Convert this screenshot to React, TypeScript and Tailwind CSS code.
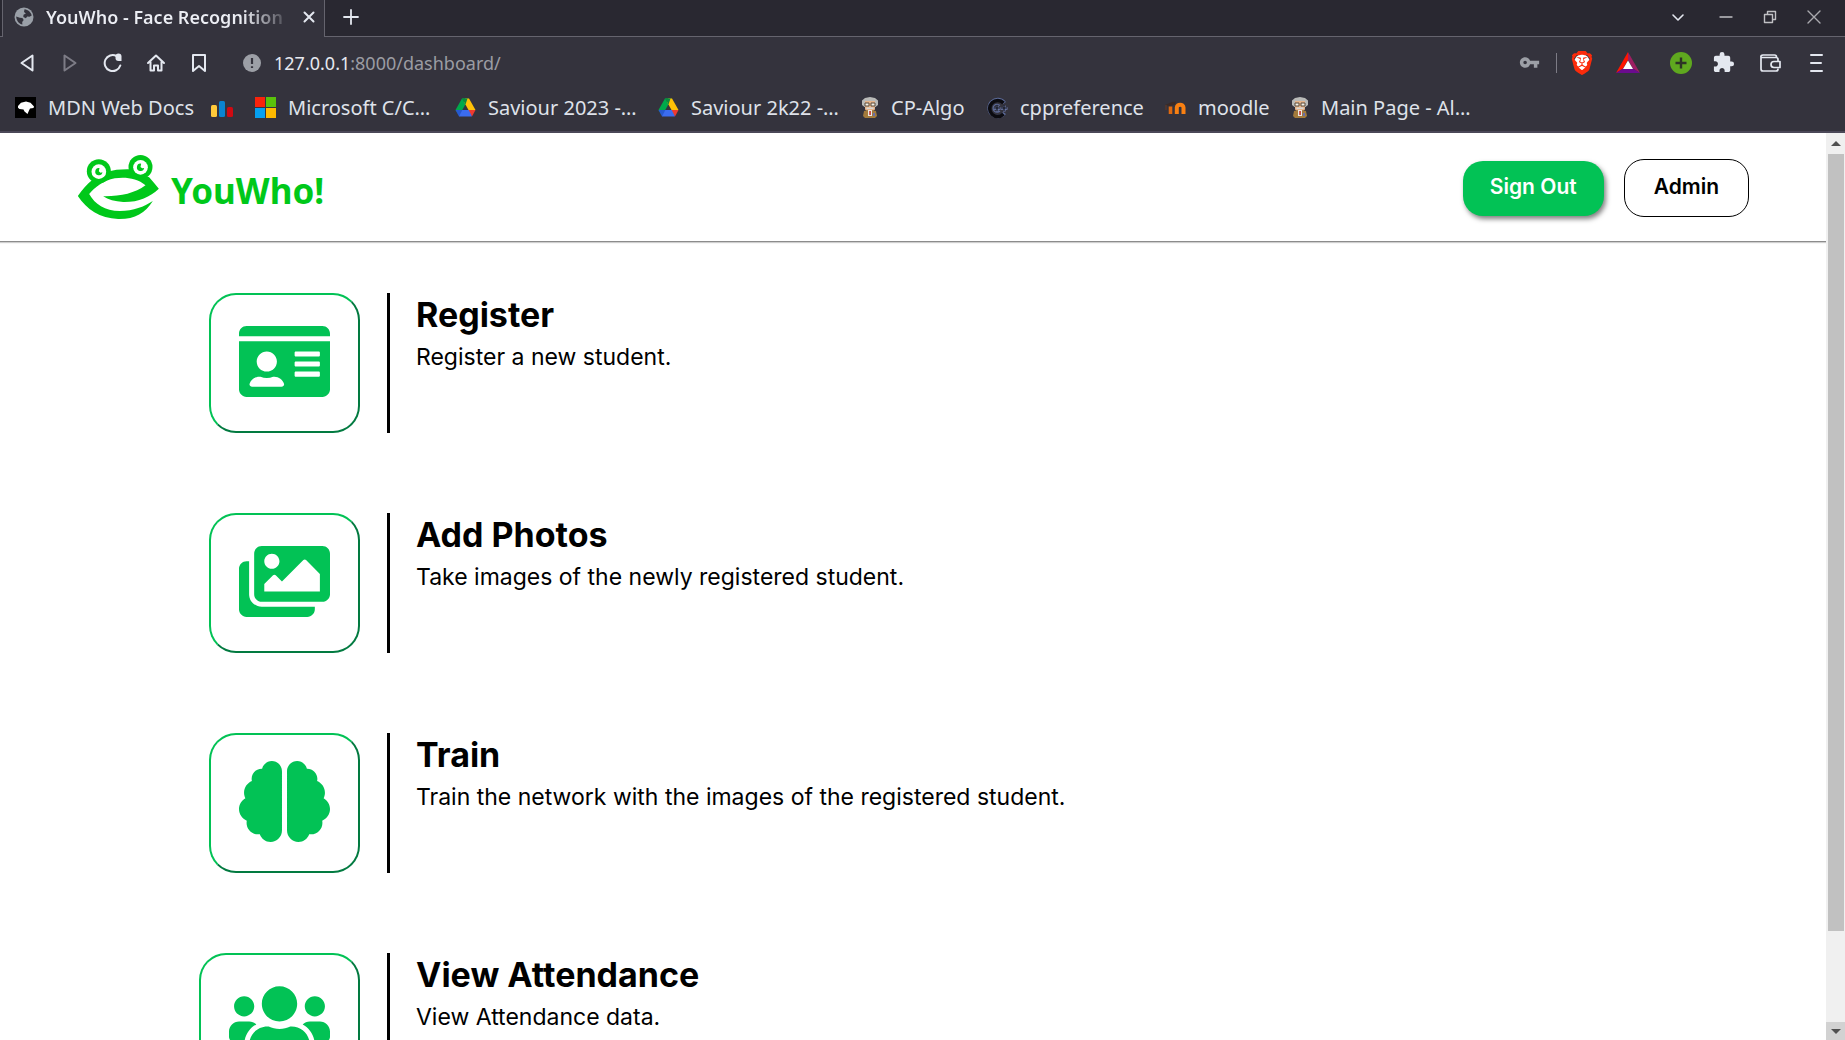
import React from "react";
import { FaBrain, FaIdCard, FaImages, FaUsers } from "react-icons/fa";
import { SiBrave } from "react-icons/si";
import { MdExtension, MdVpnKey } from "react-icons/md";

function GlobeIcon() {
  return (
    <svg viewBox="0 0 20 20" className="size-5 shrink-0" aria-hidden="true">
      <circle cx="10" cy="10" r="9.5" fill="#9aa0a8" />
      <path d="M10.5 2.2c3.600.3 6.500 2.900 7.200 6.300l-2.200 1.300-2.300-.3-1.300 1.700-2.600-1.200.2-2.200 2.400-1.200-1.900-1.500z" fill="#34333d" />
      <path d="M2.200 9.500l3.600 1.200 2.600.3 1.300 2.100-1.500 1.800.2 2.700c-3.600-.9-6.100-4.200-6.200-8.100z" fill="#34333d" />
    </svg>
  );
}

function MdnIcon() {
  return (
    <svg viewBox="0 0 21 21" className="size-[21px] shrink-0" aria-hidden="true">
      <rect width="21" height="21" fill="#000" />
      <path d="M3 9l3-3.200 5-1.300 4.500 1.200 3.500 3.800-.5 1.500-3.500.4-1.200 2.600-1.300 3-3-2.600-1-1.800-4-.6-1.500-1.300z" fill="#fff" />
    </svg>
  );
}

function BarsIcon() {
  return (
    <svg viewBox="0 0 22 21" className="h-[21px] w-[22px] shrink-0" aria-hidden="true">
      <rect x="0" y="8" width="6" height="12" rx="1.500" fill="#ffca3a" />
      <rect x="8" y="4" width="6" height="16" rx="1.500" fill="#0a84d0" />
      <rect x="16" y="10" width="6" height="10" rx="1.500" fill="#d00a12" />
    </svg>
  );
}

function MicrosoftIcon() {
  return (
    <svg viewBox="0 0 21 21" className="size-[21px] shrink-0" aria-hidden="true">
      <rect width="10" height="10" fill="#f8230b" />
      <rect x="11" width="10" height="10" fill="#5ac20b" />
      <rect y="11" width="10" height="10" fill="#06a0f0" />
      <rect x="11" y="11" width="10" height="10" fill="#fdb900" />
    </svg>
  );
}

function DriveIcon() {
  return (
    <svg viewBox="0 0 21 19" className="h-[19px] w-[21px] shrink-0" aria-hidden="true">
      <path d="M7 .5h3.500v5.800L4.200 17.500.500 12z" fill="#00a94b" />
      <path d="M7 .5h7l-3.500 6z" fill="#0b8a3e" />
      <path d="M14 .5L20.500 12h-7L8.800 3.600 10.500.5z" fill="#ffc107" />
      <path d="M7 .5h5.500l-2 6z" fill="#0b8a3e" />
      <path d="M4.200 12h12.600v6.500H4z" fill="#3b6cf0" />
      <path d="M.5 12h6.800L4 18.500z" fill="#2659d0" />
      <path d="M13.700 12h6.800L17 18.500z" fill="#ee3a2f" />
    </svg>
  );
}

function ProfessorIcon() {
  return (
    <svg viewBox="0 0 18 22" className="h-[22px] w-[18px] shrink-0" aria-hidden="true">
      <path d="M1 3.500L4 1l5-1 5 1 3 2.500V8l-2.500 2h-11L1 8z" fill="#b9bab8" />
      <path d="M4 4h10v8.500l-3 2H7l-3-2z" fill="#e5b48b" />
      <path d="M4 6h4v3H4zM10 6h4v3h-4z" fill="#f3f1e8" stroke="#5a4a3a" strokeWidth="1" />
      <path d="M5.500 10.500h7V12h-7z" fill="#d8d8d6" />
      <path d="M3 14l4-1h4l4 1 1 5-2 2H4l-2-2z" fill="#a27a3c" />
      <path d="M7 13h4v6H7z" fill="#ece8e0" />
      <path d="M8.300 14h1.500v4H8.300z" fill="#c3241e" />
      <path d="M12 16h2v3h-2z" fill="#6a6fa8" />
    </svg>
  );
}

function CppIcon() {
  return (
    <svg viewBox="0 0 22 22" className="size-[22px] shrink-0" fill="none" aria-hidden="true">
      <path d="M18.500 6A8.500 8.500 0 1 0 18.500 16" stroke="#5c6b9a" strokeWidth="3.500" />
      <path d="M17.500 6A8 8 0 1 0 17.500 17" stroke="#0b0b10" strokeWidth="3.600" />
      <path d="M14 8.500a4 4 0 1 0 0 5.500" stroke="#5c6b9a" strokeWidth="1.200" />
      <path d="M8 11.500h6.500M11.300 8.500v6M15 11.500h6.500M18.300 8.500v6" stroke="#6f7eb0" strokeWidth="2.600" />
      <path d="M8 11h6M11 8v6M15 11h6M18 8v6" stroke="#111116" strokeWidth="1.200" />
    </svg>
  );
}

function MoodleIcon() {
  return (
    <svg viewBox="0 0 21 21" className="size-[21px] shrink-0" fill="none" aria-hidden="true">
      <path d="M5.500 17V9.500" stroke="#e06a10" strokeWidth="3.600" />
      <path d="M11.800 17v-6.500c0-3.800 6.700-3.800 6.700 0V17" stroke="#f98012" strokeWidth="4" />
      <path d="M0 8l7-3 4-.5-1.500 3.500-5.500.8z" fill="#3a2a26" />
      <path d="M1 8v5" stroke="#6a3a20" strokeWidth="1" />
    </svg>
  );
}

function BatIcon() {
  return (
    <svg viewBox="0 0 24 21" className="h-[21px] w-6" aria-hidden="true">
      <path d="M12 0v8L7 16.500 0 21z" fill="#ff1500" />
      <path d="M12 0l12 21-7-4.500L12 8z" fill="#9e1f63" />
      <path d="M0 21l7-4.500h10l7 4.500z" fill="#6b0b8f" />
      <path d="M12 8.500l5 8.500H7z" fill="#fff" />
    </svg>
  );
}

function FrogLogo() {
  return (
    <svg viewBox="52 42 248 198" className="h-[66px] w-[83px] shrink-0" aria-hidden="true">
      <path
        fill="#00c81a"
        d="M54 168C68 147 82 133 97 120C125 96 160 87 209 88L268 112C278 124 288 135 297 146C270 171 235 187 190 186C165 185 145 179 130 169C180 170 225 160 257 136C232 114 195 110 165 115C130 122 105 142 88 162C105 192 135 213 180 213C222 213 252 200 279 183C255 220 225 238 175 237C120 235 80 208 54 168Z"
      />
      <circle cx="117" cy="94" r="36" fill="#00c81a" />
      <circle cx="242" cy="81" r="36" fill="#00c81a" />
      <circle cx="117" cy="95" r="22" fill="#fff" />
      <circle cx="242" cy="82" r="22" fill="#fff" />
      <path d="M119 84a11 11 0 1 0 9 13l-6 1-5-4z" fill="#00c81a" />
      <path d="M244 71a11 11 0 1 0 9 13l-6 1-5-4z" fill="#00c81a" />
    </svg>
  );
}

const line = {
  fill: "none",
  stroke: "#e4e8f0",
  strokeWidth: 2,
  strokeLinejoin: "round" as const,
  strokeLinecap: "round" as const,
};

function TabStrip() {
  return (
    <div className="flex h-[37px] bg-[#292831]">
      <div className="w-[3px] border-r border-b border-[#65646e]" />
      <div className="flex w-[322px] items-center border-r border-[#65646e] bg-[#34333d] pr-2 pb-1 pl-[11px]">
        <GlobeIcon />
        <div className="ml-3 w-[246px] shrink-0 overflow-hidden bg-gradient-to-r from-[#eceef4] from-80% to-transparent bg-clip-text text-lg font-semibold whitespace-nowrap text-transparent">
          YouWho - Face Recognition
        </div>
        <button aria-label="Close tab" className="ml-2.5 shrink-0">
          <svg viewBox="0 0 14 14" className="size-[14px]">
            <path d="M2.500 2.500l9 9M11.500 2.500l-9 9" {...line} />
          </svg>
        </button>
      </div>
      <div className="flex flex-1 items-center border-b border-[#65646e] pb-[3px]">
        <button aria-label="New tab" className="ml-[18px]">
          <svg viewBox="0 0 16 16" className="size-4">
            <path d="M8 1v14M1 8h14" {...line} strokeWidth={1.8} />
          </svg>
        </button>
        <div className="mr-6 ml-auto flex items-center gap-[30px]">
          <button aria-label="Search tabs">
            <svg viewBox="0 0 14 14" className="size-[14px]">
              <path d="M2 5l5 5 5-5" {...line} strokeWidth={1.6} />
            </svg>
          </button>
          <button aria-label="Minimize" className="ml-1">
            <svg viewBox="0 0 14 14" className="size-[14px]">
              <path d="M1 7h12" {...line} stroke="#c0c0c4" strokeWidth={1.4} />
            </svg>
          </button>
          <button aria-label="Restore">
            <svg viewBox="0 0 14 14" className="size-[14px]">
              <path d="M1.500 4.500h8v8h-8zM4.500 4V1.500h8v8H10" {...line} stroke="#c0c0c4" strokeWidth={1.4} />
            </svg>
          </button>
          <button aria-label="Close window">
            <svg viewBox="0 0 14 14" className="size-[14px]">
              <path d="M1 1l12 12M13 1L1 13" {...line} stroke="#a9a9ae" strokeWidth={1.4} />
            </svg>
          </button>
        </div>
      </div>
    </div>
  );
}

function Toolbar() {
  return (
    <div className="flex h-[51px] items-center pr-[22px] pl-[17px]">
      <div className="flex items-center gap-[23px]">
        <button aria-label="Back">
          <svg viewBox="0 0 20 20" className="size-5">
            <path d="M15.500 2.500v15L4.500 10z" {...line} />
          </svg>
        </button>
        <button aria-label="Forward">
          <svg viewBox="0 0 20 20" className="size-5">
            <path d="M4.500 2.500v15l11-7.500z" {...line} stroke="#7d7c86" />
          </svg>
        </button>
        <button aria-label="Reload">
          <svg viewBox="0 0 20 20" className="size-5">
            <path d="M13.500 3A8 8 0 1 0 17.300 12.500" {...line} />
            <path d="M12.500 3.500a3 3 0 0 1 6 0V8h-3a3 3 0 0 1-3-3z" fill="#e4e8f0" />
          </svg>
        </button>
        <button aria-label="Home">
          <svg viewBox="0 0 20 20" className="size-5">
            <path d="M2 10l8-7.500 8 7.500M4.500 9v8.500H8V12.500h4v5h3.500V9" {...line} />
          </svg>
        </button>
        <button aria-label="Bookmark">
          <svg viewBox="0 0 20 20" className="size-5">
            <path d="M4 2h12v16l-6-5-6 5z" {...line} />
          </svg>
        </button>
      </div>
      <button aria-label="Site information" className="ml-[34px]">
        <svg viewBox="0 0 18 18" className="size-[18px]">
          <circle cx="9" cy="9" r="9" fill="#9c9fa6" />
          <path d="M9 4v6M9 12.200v1.800" stroke="#34333d" strokeWidth="2.200" />
        </svg>
      </button>
      <div className="ml-[13px] flex-1 text-lg text-[#9b9ca3]">
        <span className="text-[#e6e9f0]">127.0.0.1</span>:8000/dashboard/
      </div>
      <div className="flex items-center">
        <button aria-label="Passwords">
          <MdVpnKey className="size-[21px] text-[#9c9fa6]" />
        </button>
        <div className="ml-4 h-5 w-px bg-[#7d7c86]" />
        <button aria-label="Brave Shields" className="ml-[13px]">
          <svg viewBox="0 0 24 26" className="h-[26px] w-6">
            <ellipse cx="12" cy="13" rx="8" ry="9" fill="#fff" />
            <g transform="translate(0 1)">
              <SiBrave size={24} color="#fb2b0b" />
            </g>
          </svg>
        </button>
        <button aria-label="Brave Rewards" className="ml-[22px]">
          <BatIcon />
        </button>
        <button aria-label="Add" className="ml-[30px]">
          <svg viewBox="0 0 22 22" className="size-[22px]">
            <circle cx="11" cy="11" r="11" fill="#5fa81f" />
            <path d="M11 5.500v11M5.500 11h11" stroke="#2d3326" strokeWidth="2.400" />
          </svg>
        </button>
        <button aria-label="Extensions" className="ml-5">
          <MdExtension className="size-[23px] text-[#e4e8f0]" />
        </button>
        <button aria-label="Wallet" className="ml-6">
          <svg viewBox="0 0 22 20" className="h-5 w-[22px]">
            <path d="M2 4.500V16c0 1.200.8 2 2 2h13c1.200 0 2-.8 2-2M19 8V6.500c0-1-.8-2-2-2H2C1.500 2.800 2.500 2 4 2h11.500c1 0 2 .8 2 2" {...line} strokeWidth={1.700} />
            <path d="M21 8.500h-6a3 3 0 0 0 0 6h6z" {...line} strokeWidth={1.700} />
          </svg>
        </button>
        <button aria-label="Menu" className="ml-7">
          <svg viewBox="0 0 14 18" className="h-[18px] w-[14px]">
            <path d="M2 1h11M2 9h10M2 17h11" {...line} />
          </svg>
        </button>
      </div>
    </div>
  );
}

const bookmarks = [
  { icon: <MdnIcon />, label: "MDN Web Docs", width: "w-[141px]" },
  { icon: <BarsIcon />, label: "", width: "" },
  { icon: <MicrosoftIcon />, label: "Microsoft C/C…", width: "w-[145px]" },
  { icon: <DriveIcon />, label: "Saviour 2023 -…", width: "w-[148px]" },
  { icon: <DriveIcon />, label: "Saviour 2k22 -…", width: "w-[148px]" },
  { icon: <ProfessorIcon />, label: "CP-Algo", width: "w-[73px]" },
  { icon: <CppIcon />, label: "cppreference", width: "w-[123px]" },
  { icon: <MoodleIcon />, label: "moodle", width: "w-[71px]" },
  { icon: <ProfessorIcon />, label: "Main Page - Al…", width: "w-[150px]" },
];

function BookmarksBar() {
  return (
    <nav aria-label="Bookmarks" className="flex h-[43px] items-center gap-[22px] pb-1 pl-[15px]">
      {bookmarks.map((b, i) => (
        <a key={i} href="#" aria-label={b.label || "Charts"} className="flex items-center gap-3">
          {b.icon}
          {b.label && <span className={`${b.width} text-xl whitespace-nowrap text-[#dfe2ea]`}>{b.label}</span>}
        </a>
      ))}
    </nav>
  );
}

function SiteHeader() {
  return (
    <header className="flex h-[109px] items-center border-b border-[#8c8c8c] px-[77px] shadow-[0_1px_1px_#cfcfcf]">
      <a href="#" className="flex items-center gap-[11px]">
        <FrogLogo />
        <span className="pt-2 text-[35px] leading-10 font-bold text-[#00c81a] [font-family:'Noto_Sans','Open_Sans',sans-serif]">
          YouWho!
        </span>
      </a>
      <div className="ml-auto flex items-center gap-5 pt-0.5">
        <button className="h-[55px] rounded-[20px] bg-[#02c255] px-[27px] pb-0.5 text-[21px] font-semibold text-white shadow-[2px_3px_5px_rgba(0,0,0,0.5)]">
          Sign Out
        </button>
        <button className="h-[58px] rounded-[20px] border border-black px-[29px] pb-0.5 text-[21px] font-semibold text-black">
          Admin
        </button>
      </div>
    </header>
  );
}

const actions = [
  { title: "Register", text: "Register a new student.", Icon: FaIdCard, size: "w-[91px]" },
  { title: "Add Photos", text: "Take images of the newly registered student.", Icon: FaImages, size: "w-[91px]" },
  { title: "Train", text: "Train the network with the images of the registered student.", Icon: FaBrain, size: "w-[91px]" },
  { title: "View Attendance", text: "View Attendance data.", Icon: FaUsers, size: "w-[101px]" },
];

function Dashboard() {
  return (
    <main className="flex flex-col gap-20 pt-[51px]">
      {actions.map(({ title, text, Icon, size }) => (
        <section key={title} className="flex h-[140px] shrink-0">
          <div className="flex w-[360px] shrink-0 justify-end">
            <button
              aria-label={title}
              className="rounded-[27px] border-2 border-t-[#02c255] border-r-[#027a40] border-b-[#027a40] border-l-[#02c255] px-7 pb-1"
            >
              <Icon className={`${size} h-[81px] text-[#02c255]`} />
            </button>
          </div>
          <div className="ml-[27px] w-[3px] bg-black" />
          <div className="ml-[26px]">
            <h2 className="text-[34px] leading-11 font-bold">{title}</h2>
            <p className="text-[23px] leading-10">{text}</p>
          </div>
        </section>
      ))}
    </main>
  );
}

function Scrollbar() {
  return (
    <div className="flex w-[19px] shrink-0 flex-col items-center bg-[#f0f0f0]" aria-hidden="true">
      <div className="flex h-[21px] items-center">
        <div className="border-x-5 border-b-5 border-x-transparent border-b-[#505050]" />
      </div>
      <div className="w-4 flex-[777] bg-[#c1c1c1]" />
      <div className="flex-[91]" />
      <div className="flex h-[18px] w-full items-center justify-center bg-[#d2d2d2]">
        <div className="border-x-5 border-t-5 border-x-transparent border-t-[#505050]" />
      </div>
    </div>
  );
}

export default function App() {
  return (
    <div className="flex h-screen flex-col overflow-hidden bg-white [font-family:'Inter',sans-serif]">
      <div className="shrink-0 border-b-2 border-[#4b4858] bg-[#34333d] [font-family:'Noto_Sans',sans-serif]">
        <TabStrip />
        <Toolbar />
        <BookmarksBar />
      </div>
      <div className="flex min-h-0 flex-1">
        <div className="min-w-0 flex-1 overflow-hidden text-black">
          <SiteHeader />
          <Dashboard />
        </div>
        <Scrollbar />
      </div>
    </div>
  );
}
